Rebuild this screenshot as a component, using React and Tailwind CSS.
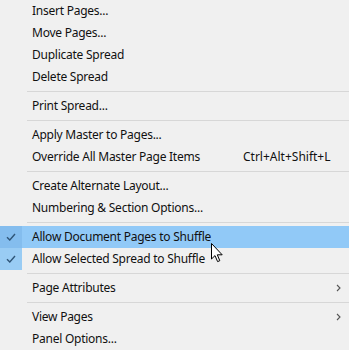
import React from 'react';

const items = [
  { label: 'Insert Pages...' },
  { label: 'Move Pages...' },
  { label: 'Duplicate Spread' },
  { label: 'Delete Spread' },
  { sep: true },
  { label: 'Print Spread...' },
  { sep: true },
  { label: 'Apply Master to Pages...' },
  { label: 'Override All Master Page Items', shortcut: 'Ctrl+Alt+Shift+L' },
  { sep: true },
  { label: 'Create Alternate Layout...' },
  { label: 'Numbering & Section Options...' },
  { sep: true },
  { label: 'Allow Document Pages to Shuffle', checked: true, hover: true, cursor: true },
  { label: 'Allow Selected Spread to Shuffle', checked: true },
  { sep: true },
  { label: 'Page Attributes', sub: true },
  { sep: true },
  { label: 'View Pages', sub: true },
  { label: 'Panel Options...' },
];

function Check() {
  return (
    <svg width="10" height="8" viewBox="0 0 10 8" fill="none">
      <path d="M1 4.2 L3.8 7 L9 1" stroke="#2f5577" strokeWidth="1.4" />
    </svg>
  );
}

function Chevron() {
  return (
    <svg width="5" height="8" viewBox="0 0 5 8" fill="none">
      <path d="M1 1 L4 4 L1 7" stroke="#555" strokeWidth="1.1" />
    </svg>
  );
}

function Cursor() {
  return (
    <svg className="absolute left-[211px] top-[17px] z-10" width="13" height="20" viewBox="0 0 13 20">
      <path d="M0.5 0.5 L0.5 16 L4 12.6 L6.6 18.6 L8.8 17.7 L6.3 11.8 L11.2 11.8 Z" fill="#fff" stroke="#000" strokeWidth="1" strokeLinejoin="round" />
    </svg>
  );
}

export default function App() {
  return (
    <div
      className="w-[349px] h-[350px] bg-[#f0f0f0] overflow-hidden text-[12px] tracking-[-0.25px] text-[#111]"
      style={{ fontFamily: '"Noto Sans", "Open Sans", sans-serif' }}
    >
      {items.map((it, i) =>
        it.sep ? (
          <div key={i} className="h-[7px] flex items-center pl-[27px]">
            <div className="h-px w-full bg-[#d7d7d7]" />
          </div>
        ) : (
          <div
            key={i}
            className={`relative h-[22px] flex items-center ${it.hover ? 'bg-[#91c9f7]' : ''}`}
          >
            <div
              className={`w-[22px] h-full flex items-center justify-center ${
                it.checked ? (it.hover ? 'bg-[#84bdee]' : 'bg-[#99ccf4]') : ''
              }`}
            >
              {it.checked && <Check />}
            </div>
            <span className="pl-[10px] leading-none">{it.label}</span>
            {it.shortcut && (
              <span className="absolute left-[243px] leading-none tracking-normal">{it.shortcut}</span>
            )}
            {it.sub && (
              <span className="absolute left-[336px] top-[7px] flex">
                <Chevron />
              </span>
            )}
            {it.cursor && <Cursor />}
          </div>
        )
      )}
    </div>
  );
}
